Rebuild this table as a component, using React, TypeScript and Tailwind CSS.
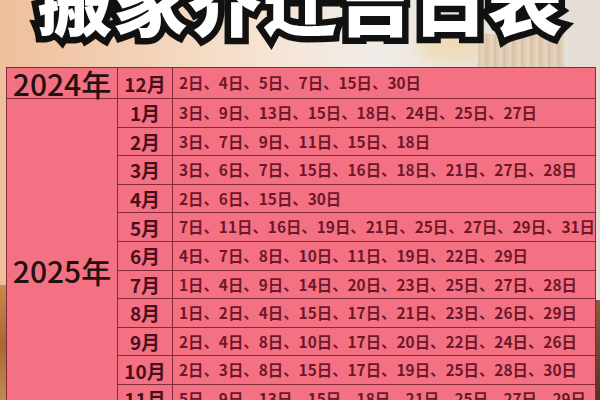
const rows2025: [string, string][] = [
  ['1月', '3日、9日、13日、15日、18日、24日、25日、27日'],
  ['2月', '3日、7日、9日、11日、15日、18日'],
  ['3月', '3日、6日、7日、15日、16日、18日、21日、27日、28日'],
  ['4月', '2日、6日、15日、30日'],
  ['5月', '7日、11日、16日、19日、21日、25日、27日、29日、31日'],
  ['6月', '4日、7日、8日、10日、11日、19日、22日、29日'],
  ['7月', '1日、4日、9日、14日、20日、23日、25日、27日、28日'],
  ['8月', '1日、2日、4日、15日、17日、21日、23日、26日、29日'],
  ['9月', '2日、4日、8日、10日、17日、20日、22日、24日、26日'],
  ['10月', '2日、3日、8日、15日、17日、19日、25日、28日、30日'],
  ['11月', '5日、9日、13日、15日、18日、21日、25日、27日、29日'],
  ['12月', '2日、6日、10日、14日、18日、22日、24日、28日'],
]

const cell = 'border-[1.5px] border-[#83293a] h-[28.6px] p-0'
const month = `${cell} text-center text-[19px] font-bold text-[#4a0f1c] leading-none`
const dates = `${cell} pl-[6px] text-left text-[15.4px] font-semibold text-[#6e1729] leading-none whitespace-nowrap`
const year = `${cell} text-center align-middle text-[30px] font-medium text-[#24100f] leading-none`

export default function App() {
  return (
    <div
      className="relative w-[600px] h-[400px] overflow-hidden bg-[linear-gradient(90deg,#eebf9c_0%,#f3d3b8_25%,#f6e4d4_45%,#f1ece7_62%,#e9e3dc_80%,#e4ddd6_100%)]"
      style={{ fontFamily: '"Noto Sans CJK SC", "Noto Sans", sans-serif' }}
    >
      {/* background details: curtains and the lower room edges */}
      <div className="absolute left-[478px] top-[34px] w-[86px] h-[40px] bg-[repeating-linear-gradient(90deg,#d8bf9f_0px,#e6d3bb_5px,#cfb392_9px)] opacity-80" />
      <div className="absolute left-[420px] top-[36px] w-[60px] h-[20px] rounded-full bg-[#f3cf86] blur-[10px] opacity-70" />
      <div className="absolute left-0 top-[285px] w-[10px] h-[115px] bg-[linear-gradient(180deg,#c98a4e,#a8682f_50%,#c08a55)]" />
      <div className="absolute right-0 top-[300px] w-[10px] h-[100px] bg-[linear-gradient(180deg,#8c5a3e,#5a2e22)]" />

      <div className="relative flex justify-center h-[67px]">
        <h1 className="-mt-[40px] text-[75px] leading-none font-black text-white whitespace-nowrap [-webkit-text-stroke:13px_#111] [paint-order:stroke_fill]">
          搬家乔迁吉日表
        </h1>
      </div>

      <table className="relative ml-[6px] w-[590px] border-collapse table-fixed bg-[#f47184]">
        <colgroup>
          <col className="w-[111px]" />
          <col className="w-[55px]" />
          <col />
        </colgroup>
        <tbody>
          <tr>
            <td className={`${year} h-[29.5px]`}>2024年</td>
            <td className={month}>12月</td>
            <td className={dates}>2日、4日、5日、7日、15日、30日</td>
          </tr>
          {rows2025.map(([m, d], i) => (
            <tr key={m}>
              {i === 0 && (
                <td rowSpan={12} className={year}>
                  2025年
                </td>
              )}
              <td className={month}>{m}</td>
              <td className={dates}>{d}</td>
            </tr>
          ))}
        </tbody>
      </table>
    </div>
  )
}
